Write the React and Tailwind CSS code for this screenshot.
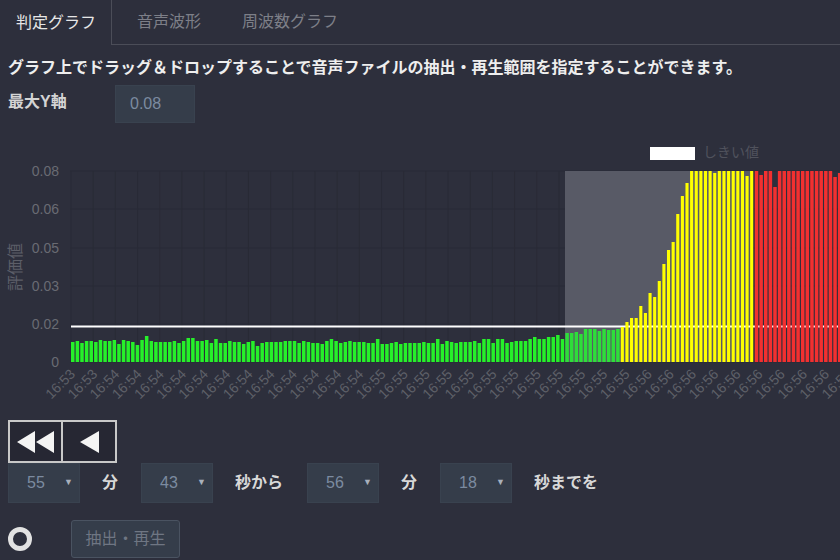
const FONT = { fontFamily: '"Liberation Sans", "Noto Sans CJK JP", sans-serif' };

const greenHeights = [
  20, 21, 19, 21, 21, 20, 22, 21, 21, 22, 18, 22, 21, 20, 17, 22, 26, 21, 20, 20, 20, 20, 21, 19, 21, 24, 24, 21, 21, 22, 19, 23, 19, 19, 21, 20, 20, 18,
  20, 21, 16, 19, 20, 20, 20, 20, 21, 21, 21, 19, 21, 20, 19, 19, 18, 21, 23, 21, 19, 20, 21, 20, 20, 20, 19, 19, 23, 18, 18, 19, 20, 18, 19, 19, 19, 19,
  20, 19, 19, 23, 18, 21, 20, 19, 20, 20, 20, 21, 19, 23, 23, 19, 23, 23, 19, 20, 21, 21, 21, 23, 25, 23, 23, 25, 25, 27, 23, 29, 29, 30, 28, 33, 33, 33, 31, 33, 32, 32, 33,
];
const yellowHeights = [35, 40, 44, 44, 56, 49, 69, 65, 81, 98, 112, 120, 148, 166, 179, 191, 191, 191, 191, 191, 189, 191, 191, 191, 191, 191, 191, 186, 191];
const redHeights = [191, 187, 191, 191, 175, 191, 191, 191, 191, 191, 191, 191, 191, 191, 191, 191, 191, 185, 189];

const bars = [
  ...greenHeights.map((h) => ({ h, color: 'green' })),
  ...yellowHeights.map((h) => ({ h, color: 'yellow' })),
  ...redHeights.map((h) => ({ h, color: 'red' })),
];

const yTicks = [
  ['0.08', 171],
  ['0.06', 209],
  ['0.05', 248],
  ['0.03', 286],
  ['0.02', 324],
  ['0', 362],
];

// 36 labels, the last one runs off the right edge
const xLabels = [...Array(36)].map((_, i) => {
  if (i < 2) return '16:53';
  if (i < 14) return '16:54';
  if (i < 26) return '16:55';
  return '16:56';
});

function barFill(bar, x) {
  if (bar.color === 'red') return '#f23030';
  if (bar.color === 'yellow') return '#ffff00';
  return x >= 565 ? '#2ede3a' : '#26f02a';
}

function Chart() {
  return (
    <svg width="840" height="297" viewBox="0 123 840 297" className="block" style={FONT}>
      <rect x="650" y="147" width="45" height="13" fill="#ffffff" />
      <text x="703" y="157" fontSize="14" fill="#50525c">しきい値</text>

      {yTicks.map(([label, y]) => (
        <g key={y}>
          <line x1="70" x2="840" y1={y} y2={y} stroke="#292b36" />
          <text x="59" y={y + 5} fontSize="14" textAnchor="end" fill="#696b73">{label}</text>
        </g>
      ))}
      {xLabels.map((_, i) => (
        <line key={i} x1={71 + i * 22.18} x2={71 + i * 22.18} y1="171" y2="362" stroke="#292b36" />
      ))}
      <text transform="translate(21 267) rotate(-90)" fontSize="16" textAnchor="middle" fill="#5c5e68">評価値</text>

      {/* selected range */}
      <rect x="565" y="171" width="188" height="191" fill="#585a66" />
      <line x1="71" x2="840" y1="326.5" y2="326.5" stroke="#ffffff" strokeWidth="2" />

      {bars.map((bar, i) => {
        const x = 71 + i * 4.62;
        return (
          <rect
            key={i}
            x={x}
            y={362 - bar.h}
            width={bar.color === 'yellow' ? 3.1 : 3.5}
            height={bar.h}
            fill={barFill(bar, x)}
          />
        );
      })}

      {xLabels.map((label, i) => (
        <text
          key={i}
          transform={`translate(${76 + i * 22.18} 375) rotate(-45)`}
          fontSize="14"
          textAnchor="end"
          fill="#5e6068"
        >
          {label}
        </text>
      ))}
    </svg>
  );
}

function TimeSelect({ value }) {
  return (
    <div className="flex h-10 w-[72px] items-center border border-[#39424f] bg-[#353d4a] pl-[18px] pr-[6px] text-base font-normal text-[#7c8ba0]">
      <span className="flex-1">{value}</span>
      <span className="text-[9px] text-[#a8b0bc]">▼</span>
    </div>
  );
}

export default function App() {
  return (
    <div className="h-[560px] w-[840px] overflow-hidden bg-[#2d2f3c]" style={FONT}>
      <div className="flex h-[45px] text-base">
        <div className="flex w-[112px] items-center border-r border-[#4b4d58] pl-4 text-[#e6e6e6]">判定グラフ</div>
        <div className="flex flex-1 items-center gap-[41px] border-b border-[#4b4d58] pl-[25px] text-[#7d7f88]">
          <span>音声波形</span>
          <span>周波数グラフ</span>
        </div>
      </div>

      <p className="mt-[11px] pl-2 text-base leading-6 font-bold text-[#eeeeee]">
        グラフ上でドラッグ＆ドロップすることで音声ファイルの抽出・再生範囲を指定することができます。
      </p>

      <div className="mt-[5px] flex h-[38px] pl-2">
        <span className="w-[107px] pt-[5px] text-base font-bold leading-6 text-[#d4d4d4]">最大Y軸</span>
        <div className="flex w-[80px] items-center border border-[#39424f] bg-[#353d4a] pl-[14px] text-base text-[#7c8ba0]">0.08</div>
      </div>

      <Chart />

      <div className="flex pl-2">
        <button className="flex h-[43px] w-[55px] items-center justify-center border-2 border-[#c8c8c8] bg-[#262733]">
          <svg width="37" height="22" viewBox="0 0 37 22">
            <path d="M0 11 18 0v22zM19 11 37 0v22z" fill="#f4f4f4" />
          </svg>
        </button>
        <button className="flex h-[43px] w-[54px] items-center justify-center border-2 border-l-0 border-[#c8c8c8] bg-[#262733]">
          <svg width="19" height="22" viewBox="0 0 19 22">
            <path d="M0 11 19 0v22z" fill="#f4f4f4" />
          </svg>
        </button>
      </div>

      <div className="flex items-center pl-2 text-base font-bold text-[#d8d8d8]">
        <TimeSelect value="55" />
        <span className="ml-[22px] w-[39px]">分</span>
        <TimeSelect value="43" />
        <span className="ml-[22px] w-[72px]">秒から</span>
        <TimeSelect value="56" />
        <span className="ml-[22px] w-[39px]">分</span>
        <TimeSelect value="18" />
        <span className="ml-[22px]">秒までを</span>
      </div>

      <div className="mt-[17px] flex items-center pl-2">
        <div className="size-6 rounded-full border-[5px] border-[#e2e2e2]" />
        <button className="ml-[39px] h-[38px] w-[109px] rounded-[3px] border border-[#4a5361] bg-[#353d4a] text-base text-[#6f7683]">
          抽出・再生
        </button>
      </div>
    </div>
  );
}
